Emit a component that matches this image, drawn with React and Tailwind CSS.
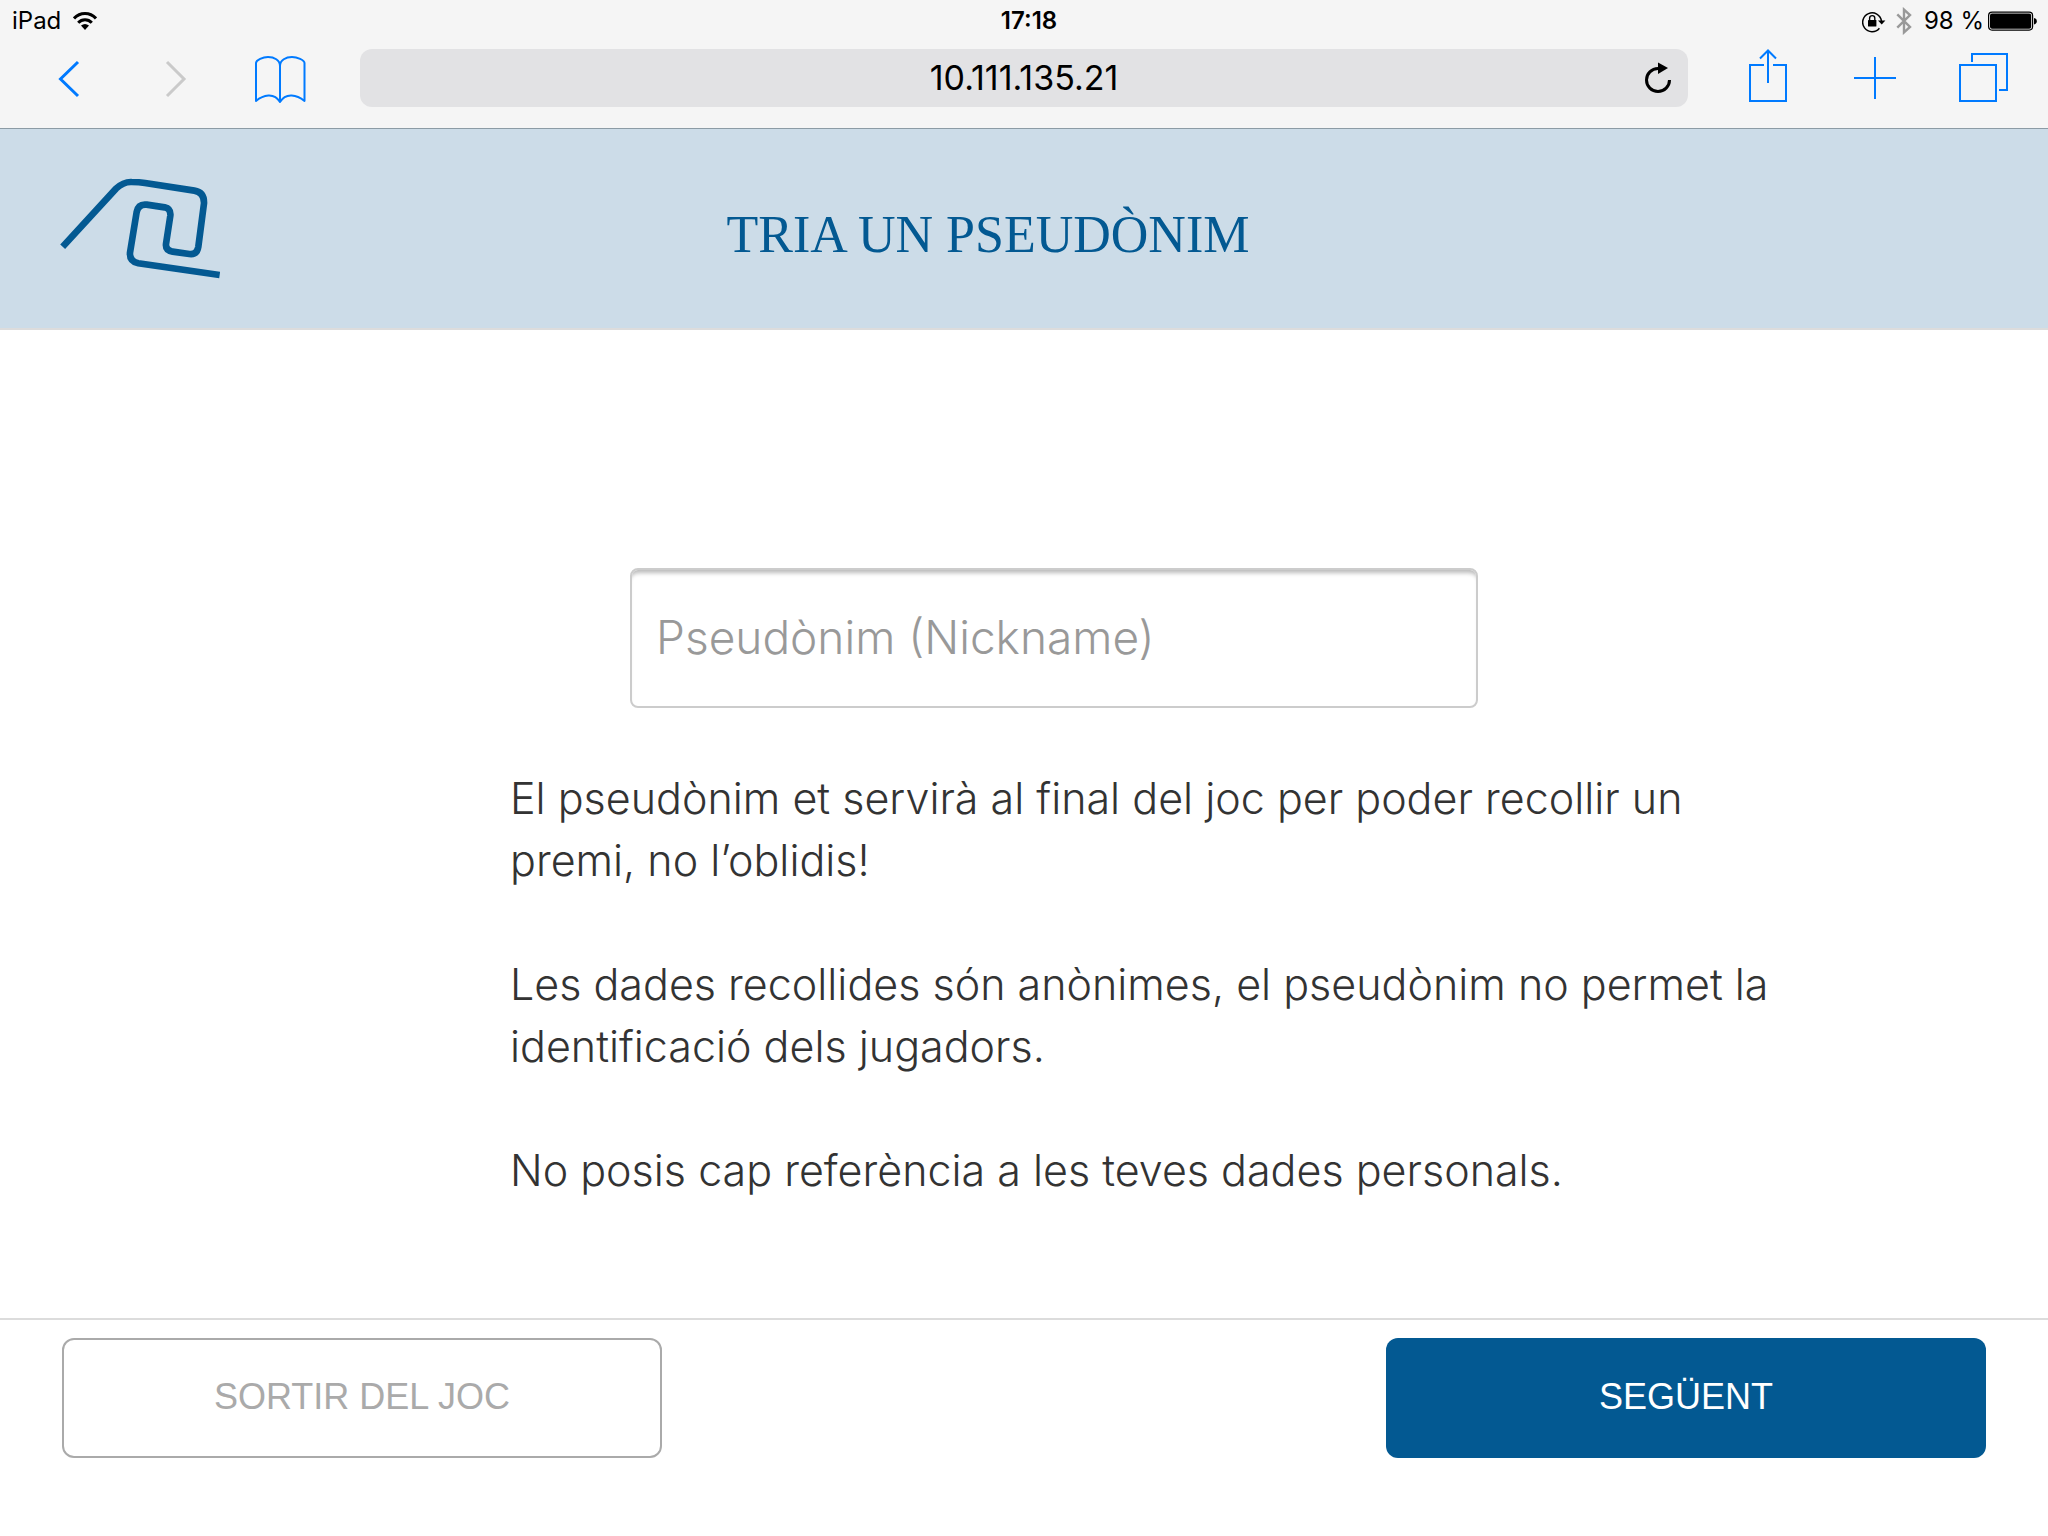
import React from "react";

const ICON_BUTTON = "flex w-[106px] items-center justify-center";

function WifiIcon() {
  return (
    <svg className="h-5 w-6" viewBox="0 0 24 20" aria-hidden="true">
      <g fill="none" stroke="#000" strokeWidth="3">
        <path d="M1 7.5C7 .8 17 .8 23 7.5" />
        <path d="M5.2 11.8C9 7.8 15 7.8 18.8 11.8" />
      </g>
      <path d="M8 14.6Q12 11.4 16 14.6L12 19Z" fill="#000" />
    </svg>
  );
}

function RotationLockIcon() {
  return (
    <svg className="h-6 w-6" viewBox="0 0 24 24" aria-hidden="true">
      <path d="M17.4 19.2A9.4 9.4 0 1 1 19.4 12" fill="none" stroke="#000" strokeWidth="1.5" />
      <path d="M16 11.4H23.4L19.7 15.6Z" fill="#000" />
      <rect x="6" y="11" width="8.4" height="6.6" rx="0.6" fill="#000" />
      <path d="M7.6 11V9.2A2.6 2.6 0 0 1 12.8 9.2V11" fill="none" stroke="#000" strokeWidth="1.4" />
    </svg>
  );
}

function BluetoothIcon() {
  return (
    <svg className="h-7 w-4" viewBox="0 0 16 28" aria-hidden="true">
      <path d="M1.3 7.3L14 20L8 25.4V2.6L14 8L1.3 20.7" fill="none" stroke="#999" strokeWidth="2.4" />
    </svg>
  );
}

function BatteryIcon() {
  return (
    <svg className="h-5 w-[50px]" viewBox="0 0 50 20" aria-hidden="true">
      <rect x="0.6" y="1.1" width="44" height="18" rx="3.5" fill="none" stroke="#000" strokeWidth="1.2" />
      <rect x="2" y="2.5" width="41.2" height="15.2" rx="2" fill="#000" />
      <path d="M46 7Q48.8 7.6 48.8 10.2T46 13.4Z" fill="#000" />
    </svg>
  );
}

function ToolbarIcon({ children }) {
  return (
    <svg
      className="h-[60px] w-[60px]"
      viewBox="0 0 60 60"
      fill="none"
      stroke="currentColor"
      strokeWidth="2"
      aria-hidden="true"
    >
      {children}
    </svg>
  );
}

function StatusBar() {
  return (
    <div className="grid h-10 grid-cols-[1fr_auto_1fr] items-center pt-0.5 pr-0.5 pl-3 text-2xl leading-6">
      <div className="flex items-center gap-3">
        <span>iPad</span>
        <WifiIcon />
      </div>
      <time className="font-semibold">17:18</time>
      <div className="flex items-center justify-end pr-2">
        <RotationLockIcon />
        <span className="mr-3 ml-2.5 flex">
          <BluetoothIcon />
        </span>
        <span className="mr-1">98 %</span>
        <BatteryIcon />
      </div>
    </div>
  );
}

function BrowserToolbar() {
  return (
    <div className="flex items-center px-4 pt-2 pb-5 text-[#007aff]">
      <button type="button" aria-label="Enrere" className={ICON_BUTTON}>
        <ToolbarIcon>
          <path d="M39 14L21.5 31L39 48" strokeWidth="3" />
        </ToolbarIcon>
      </button>
      <button type="button" aria-label="Endavant" disabled className="flex w-[106px] items-center justify-center text-[#cacaca]">
        <ToolbarIcon>
          <path d="M22 14L39 31L22 48" strokeWidth="3" />
        </ToolbarIcon>
      </button>
      <button type="button" aria-label="Adreces d'interès" className={ICON_BUTTON}>
        <ToolbarIcon>
          <path
            d="M29 54V18C29 12 23 9 17 9C12 9 5 12 5 15V53C12 47 23 44 29 54C35 44 46 47 53.5 53V15C53.5 12 46 9 41 9C35 9 29 12 29 18"
            strokeLinejoin="round"
          />
        </ToolbarIcon>
      </button>
      <form
        className="mx-[26px] grid h-[58px] flex-1 grid-cols-[60px_1fr_60px] items-center rounded-xl bg-[#e2e2e4] text-black"
        onSubmit={(event) => event.preventDefault()}
      >
        <input
          type="text"
          aria-label="Adreça"
          defaultValue="10.111.135.21"
          className="col-start-2 w-full bg-transparent text-center text-[34px] leading-10 outline-none"
        />
        <button type="button" aria-label="Torna a carregar" className="flex items-center justify-center">
          <svg className="h-9 w-[30px]" viewBox="0 0 30 36" aria-hidden="true">
            <path d="M26.5 20A11.5 11.5 0 1 1 15 8.5" fill="none" stroke="#000" strokeWidth="3" />
            <path d="M15 2.5L25 8L15 14Z" fill="#000" />
          </svg>
        </button>
      </form>
      <button type="button" aria-label="Comparteix" className={ICON_BUTTON}>
        <ToolbarIcon>
          <path d="M27 17H13V53H49V17H36M31 35V3M23 10.5L31 2.5L39 10.5" />
        </ToolbarIcon>
      </button>
      <button type="button" aria-label="Pestanya nova" className={ICON_BUTTON}>
        <ToolbarIcon>
          <path d="M11 30H53M32 9V51" />
        </ToolbarIcon>
      </button>
      <button type="button" aria-label="Pestanyes" className={ICON_BUTTON}>
        <ToolbarIcon>
          <path d="M11 17H47V53H11ZM23 14V6H58V42H50" />
        </ToolbarIcon>
      </button>
    </div>
  );
}

function Logo() {
  return (
    <svg className="h-[102px] w-[160px]" viewBox="60 82 480 306" role="img" aria-label="Logotip">
      <path
        d="M68 288L228 114Q250 93 275 94Q298 94 315 97L463 120Q493 125 492 158L475 288Q471 313 448 310L398 303Q376 299 378 280L391 195Q393 174 374 170L320 162Q295 159 290 184L270 306Q268 332 295 338L539 373"
        fill="none"
        stroke="#035992"
        strokeWidth="20"
      />
    </svg>
  );
}

export default function App() {
  return (
    <div className="flex min-h-screen flex-col bg-white text-[#333]">
      <div className="border-b border-[#8c9ba5] bg-[#f5f5f5] font-['Inter',sans-serif] text-black">
        <StatusBar />
        <BrowserToolbar />
      </div>

      <header className="grid h-[201px] grid-cols-[1fr_auto_1fr] items-center border-b-2 border-[#dcdcdc] bg-[#ccdce8] pr-[132px] pl-[60px]">
        <Logo />
        <h1 className="mt-3 font-['Liberation_Serif',serif] text-[52px] leading-[60px] text-[#035992]">
          TRIA UN PSEUDÒNIM
        </h1>
      </header>

      <main className="grid flex-1 grid-cols-[510fr_1280fr_258fr] content-start pt-[238px] font-['Inter',sans-serif] font-light">
        <div className="col-start-2">
          <input
            type="text"
            aria-label="Pseudònim (Nickname)"
            placeholder="Pseudònim (Nickname)"
            className="ml-[120px] block h-[140px] w-[848px] rounded-lg border-2 border-[#ccc] px-6 pb-0.5 text-[46px] shadow-[inset_0_6px_4px_-3px_#bbb] outline-none placeholder:text-[#999]"
          />
          <div className="mt-[59px] flex flex-col gap-[62px] text-[43px] leading-[62px]">
            <p>El pseudònim et servirà al final del joc per poder recollir un premi, no l’oblidis!</p>
            <p>Les dades recollides són anònimes, el pseudònim no permet la identificació dels jugadors.</p>
            <p>No posis cap referència a les teves dades personals.</p>
          </div>
        </div>
      </main>

      <footer className="flex justify-between border-t-2 border-[#dcdcdc] px-[62px] pt-[18px] pb-[78px] font-['Liberation_Sans',sans-serif] text-4xl">
        <button type="button" className="h-[120px] w-[600px] rounded-xl border-2 border-[#aaa] pb-0.5 text-[#aaa]">
          SORTIR DEL JOC
        </button>
        <button type="button" className="h-[120px] w-[600px] rounded-xl bg-[#035992] pb-0.5 text-white">
          SEGÜENT
        </button>
      </footer>
    </div>
  );
}
